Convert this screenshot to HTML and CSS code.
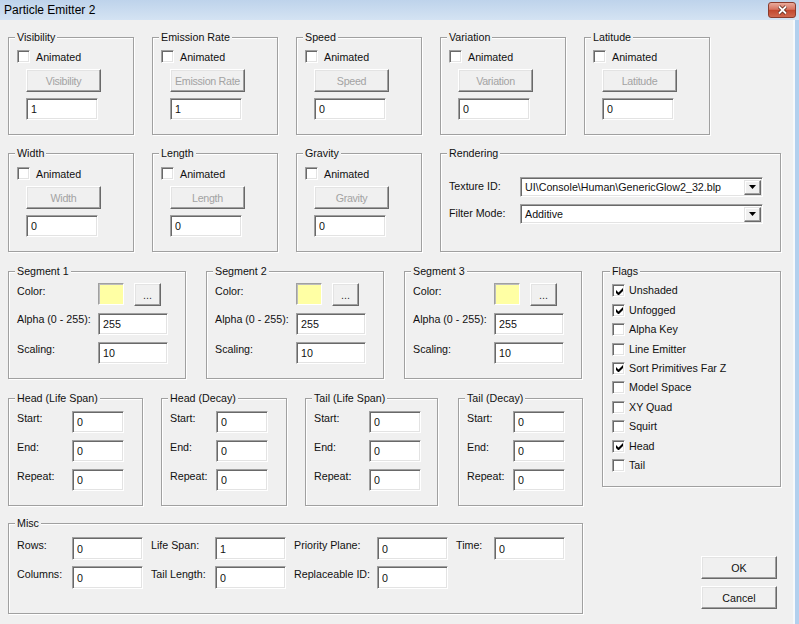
FILE: index.html
```html
<!DOCTYPE html>
<html lang="en">
<head>
    <meta charset="UTF-8">
    <title>Particle Emitter 2</title>
    <link rel="stylesheet" href="styles.css">
</head>
<body>
<div class="window">
    <div class="titlebar">
        <span class="title">Particle Emitter 2</span>
        <span class="close">
            <svg width="13" height="10" viewBox="0 0 13 10">
                <path d="M3 1.5l7 7M10 1.5l-7 7" stroke="#5a2418" stroke-width="3.4"/>
                <path d="M3 1.5l7 7M10 1.5l-7 7" stroke="#fff" stroke-width="1.8"/>
            </svg>
        </span>
    </div>
    <div class="frame-wrap">
        <div class="client">
            <!-- animated tracks -->
            <div class="row row-top">
                <div class="group anim">
                    <div class="legend">Visibility</div>
                    <label class="check-row"><span class="check"></span>Animated</label>
                    <button type="button" class="btn btn-track">Visibility</button>
                    <input class="edit edit-track" type="text" value="1">
                </div>
                <div class="group anim">
                    <div class="legend">Emission Rate</div>
                    <label class="check-row"><span class="check"></span>Animated</label>
                    <button type="button" class="btn btn-track">Emission Rate</button>
                    <input class="edit edit-track" type="text" value="1">
                </div>
                <div class="group anim">
                    <div class="legend">Speed</div>
                    <label class="check-row"><span class="check"></span>Animated</label>
                    <button type="button" class="btn btn-track">Speed</button>
                    <input class="edit edit-track" type="text" value="0">
                </div>
                <div class="group anim">
                    <div class="legend">Variation</div>
                    <label class="check-row"><span class="check"></span>Animated</label>
                    <button type="button" class="btn btn-track">Variation</button>
                    <input class="edit edit-track" type="text" value="0">
                </div>
                <div class="group anim">
                    <div class="legend">Latitude</div>
                    <label class="check-row"><span class="check"></span>Animated</label>
                    <button type="button" class="btn btn-track">Latitude</button>
                    <input class="edit edit-track" type="text" value="0">
                </div>
            </div>

            <div class="row row-mid">
                <div class="group anim">
                    <div class="legend">Width</div>
                    <label class="check-row"><span class="check"></span>Animated</label>
                    <button type="button" class="btn btn-track">Width</button>
                    <input class="edit edit-track" type="text" value="0">
                </div>
                <div class="group anim">
                    <div class="legend">Length</div>
                    <label class="check-row"><span class="check"></span>Animated</label>
                    <button type="button" class="btn btn-track">Length</button>
                    <input class="edit edit-track" type="text" value="0">
                </div>
                <div class="group anim">
                    <div class="legend">Gravity</div>
                    <label class="check-row"><span class="check"></span>Animated</label>
                    <button type="button" class="btn btn-track">Gravity</button>
                    <input class="edit edit-track" type="text" value="0">
                </div>
                <div class="group rendering">
                    <div class="legend">Rendering</div>
                    <div class="render-grid">
                        <span class="lbl">Texture ID:</span>
                        <div class="combo"><span>UI\Console\Human\GenericGlow2_32.blp</span><span class="combo-arrow"><svg width="7" height="4" viewBox="0 0 7 4"><path d="M0 0h7L3.5 4z" fill="#000"/></svg></span></div>
                        <span class="lbl">Filter Mode:</span>
                        <div class="combo"><span>Additive</span><span class="combo-arrow"><svg width="7" height="4" viewBox="0 0 7 4"><path d="M0 0h7L3.5 4z" fill="#000"/></svg></span></div>
                    </div>
                </div>
            </div>

            <div class="lower">
                <div class="lower-main">
                    <!-- segments -->
                    <div class="segments">
                        <div class="group segment">
                            <div class="legend">Segment 1</div>
                            <div class="seg-grid">
                                <span class="lbl lbl-color">Color:</span>
                                <div class="color-pick"><span class="swatch"></span><button type="button" class="btn btn-dots">...</button></div>
                                <span class="lbl">Alpha (0 - 255):</span>
                                <input class="edit edit-seg" type="text" value="255">
                                <span class="lbl lbl-scale">Scaling:</span>
                                <input class="edit edit-seg" type="text" value="10">
                            </div>
                        </div>
                        <div class="group segment">
                            <div class="legend">Segment 2</div>
                            <div class="seg-grid">
                                <span class="lbl lbl-color">Color:</span>
                                <div class="color-pick"><span class="swatch"></span><button type="button" class="btn btn-dots">...</button></div>
                                <span class="lbl">Alpha (0 - 255):</span>
                                <input class="edit edit-seg" type="text" value="255">
                                <span class="lbl lbl-scale">Scaling:</span>
                                <input class="edit edit-seg" type="text" value="10">
                            </div>
                        </div>
                        <div class="group segment">
                            <div class="legend">Segment 3</div>
                            <div class="seg-grid">
                                <span class="lbl lbl-color">Color:</span>
                                <div class="color-pick"><span class="swatch"></span><button type="button" class="btn btn-dots">...</button></div>
                                <span class="lbl">Alpha (0 - 255):</span>
                                <input class="edit edit-seg" type="text" value="255">
                                <span class="lbl lbl-scale">Scaling:</span>
                                <input class="edit edit-seg" type="text" value="10">
                            </div>
                        </div>
                    </div>

                    <!-- head / tail -->
                    <div class="spans">
                        <div class="group span span-hl">
                            <div class="legend">Head (Life Span)</div>
                            <div class="span-grid wide">
                                <span class="lbl">Start:</span><input class="edit" type="text" value="0">
                                <span class="lbl">End:</span><input class="edit" type="text" value="0">
                                <span class="lbl">Repeat:</span><input class="edit" type="text" value="0">
                            </div>
                        </div>
                        <div class="group span span-hd">
                            <div class="legend">Head (Decay)</div>
                            <div class="span-grid narrow">
                                <span class="lbl">Start:</span><input class="edit" type="text" value="0">
                                <span class="lbl">End:</span><input class="edit" type="text" value="0">
                                <span class="lbl">Repeat:</span><input class="edit" type="text" value="0">
                            </div>
                        </div>
                        <div class="group span span-tl">
                            <div class="legend">Tail (Life Span)</div>
                            <div class="span-grid wide">
                                <span class="lbl">Start:</span><input class="edit" type="text" value="0">
                                <span class="lbl">End:</span><input class="edit" type="text" value="0">
                                <span class="lbl">Repeat:</span><input class="edit" type="text" value="0">
                            </div>
                        </div>
                        <div class="group span span-td">
                            <div class="legend">Tail (Decay)</div>
                            <div class="span-grid narrow">
                                <span class="lbl">Start:</span><input class="edit" type="text" value="0">
                                <span class="lbl">End:</span><input class="edit" type="text" value="0">
                                <span class="lbl">Repeat:</span><input class="edit" type="text" value="0">
                            </div>
                        </div>
                    </div>

                    <!-- misc -->
                    <div class="group misc">
                        <div class="legend">Misc</div>
                        <div class="misc-grid">
                            <span class="lbl">Rows:</span><input class="edit" type="text" value="0">
                            <span class="lbl">Life Span:</span><input class="edit" type="text" value="1">
                            <span class="lbl">Priority Plane:</span><input class="edit" type="text" value="0">
                            <span class="lbl">Time:</span><input class="edit" type="text" value="0">
                            <span class="lbl">Columns:</span><input class="edit" type="text" value="0">
                            <span class="lbl">Tail Length:</span><input class="edit" type="text" value="0">
                            <span class="lbl">Replaceable ID:</span><input class="edit" type="text" value="0">
                        </div>
                    </div>
                </div>

                <div class="side">
                    <div class="group flags">
                        <div class="legend">Flags</div>
                        <div class="flag-list">
                            <label class="flag"><span class="check on"><svg width="7" height="7" viewBox="0 0 7 7"><path d="M0 2l2.5 2.5L7 0v3L2.5 7.5 0 5z" fill="#000"/></svg></span>Unshaded</label>
                            <label class="flag"><span class="check on"><svg width="7" height="7" viewBox="0 0 7 7"><path d="M0 2l2.5 2.5L7 0v3L2.5 7.5 0 5z" fill="#000"/></svg></span>Unfogged</label>
                            <label class="flag"><span class="check"></span>Alpha Key</label>
                            <label class="flag"><span class="check"></span>Line Emitter</label>
                            <label class="flag"><span class="check on"><svg width="7" height="7" viewBox="0 0 7 7"><path d="M0 2l2.5 2.5L7 0v3L2.5 7.5 0 5z" fill="#000"/></svg></span>Sort Primitives Far Z</label>
                            <label class="flag"><span class="check"></span>Model Space</label>
                            <label class="flag"><span class="check"></span>XY Quad</label>
                            <label class="flag"><span class="check"></span>Squirt</label>
                            <label class="flag"><span class="check on"><svg width="7" height="7" viewBox="0 0 7 7"><path d="M0 2l2.5 2.5L7 0v3L2.5 7.5 0 5z" fill="#000"/></svg></span>Head</label>
                            <label class="flag"><span class="check"></span>Tail</label>
                        </div>
                    </div>
                    <div class="dialog-buttons">
                        <button type="button" class="btn btn-dialog">OK</button>
                        <button type="button" class="btn btn-dialog">Cancel</button>
                    </div>
                </div>
            </div>
        </div>
        <div class="frame"></div>
    </div>
</div>
</body>
</html>
```

FILE: styles.css
```css
* {
    box-sizing: border-box;
}

body {
    margin: 0;
    background: #f0f0f0;
    font-family: "Liberation Sans", Arial, sans-serif;
    font-size: 10.7px;
    color: #111;
}

.window {
    width: 799px;
    height: 624px;
    overflow: hidden;
}

/* title bar */
.titlebar {
    height: 20px;
    display: flex;
    align-items: center;
    padding: 0 3px 0 4px;
    background: linear-gradient(#bed3eb, #d4e3f3);
}

.title {
    font-size: 12px;
    color: #000;
}

.close {
    margin-left: auto;
    width: 28px;
    height: 16px;
    display: flex;
    align-items: center;
    justify-content: center;
    border: 1px solid #8a3b2c;
    border-radius: 3px;
    background: linear-gradient(#e9ab9c, #d77461 45%, #c2472e 52%, #d0684f);
}

.frame-wrap {
    display: flex;
    height: 604px;
}

.client {
    width: 793px;
    padding: 17px 0 0 8px;
}

.frame {
    width: 6px;
    background: linear-gradient(to right, #f6f9fc 0, #f6f9fc 2px, #b3d0ee 2px);
}

/* group boxes */
.group {
    border: 1px solid #a0a0a0;
    box-shadow: inset 1px 1px 0 #fff, 1px 1px 0 #fff;
    padding: 0 8px;
}

.legend {
    width: fit-content;
    height: 13px;
    line-height: 13px;
    margin: -7px 0 0 -2px;
    padding: 0 2px;
    background: #f0f0f0;
}

.lbl {
    line-height: 13px;
    white-space: nowrap;
}

/* controls */
.check {
    width: 13px;
    height: 13px;
    flex: none;
    display: flex;
    align-items: center;
    justify-content: center;
    background: #fff;
    border: 1px solid;
    border-color: #a0a0a0 #fff #fff #a0a0a0;
    box-shadow: inset 1px 1px 0 #696969, inset -1px -1px 0 #e3e3e3;
}

.check svg {
    margin: 1px 0 0 1px;
}

.btn {
    display: block;
    padding: 0;
    font: inherit;
    color: #111;
    background: #f0f0f0;
    border: 1px solid;
    border-color: #fff #696969 #696969 #fff;
    box-shadow: inset -1px -1px 0 #a0a0a0, inset 1px 1px 0 #e3e3e3;
    text-align: center;
    white-space: nowrap;
}

.edit {
    display: block;
    height: 22px;
    margin: 0;
    padding: 0 4px;
    font: inherit;
    color: #111;
    background: #fff;
    border: 1px solid;
    border-color: #a0a0a0 #fff #fff #a0a0a0;
    box-shadow: inset 1px 1px 0 #696969, inset -1px -1px 0 #e3e3e3;
    outline: none;
}

/* rows */
.row {
    display: flex;
    gap: 18px;
}

.row-top {
    height: 98px;
}

.row-mid {
    height: 99px;
    margin-top: 18px;
}

.anim {
    width: 126px;
}

.check-row {
    display: flex;
    align-items: flex-start;
    gap: 6px;
    height: 13px;
    line-height: 15px;
    margin-top: 6px;
}

.row-mid .check-row {
    margin-top: 7px;
}

.btn-track {
    width: 75px;
    height: 23px;
    margin: 6px 0 0 9px;
    color: #a3a3a3;
    letter-spacing: -0.3px;
}

.edit-track {
    width: 72px;
    margin: 6px 0 0 9px;
}

/* rendering */
.rendering {
    width: 341px;
}

.render-grid {
    display: grid;
    grid-template-columns: 71px 243px;
    grid-template-rows: 20px 20px;
    row-gap: 7px;
    margin-top: 17px;
}

.render-grid .lbl {
    padding-top: 3px;
}

.combo {
    display: flex;
    align-items: center;
    height: 20px;
    padding: 0 1px 0 4px;
    background: #fff;
    border: 1px solid;
    border-color: #a0a0a0 #fff #fff #a0a0a0;
    box-shadow: inset 1px 1px 0 #696969, inset -1px -1px 0 #e3e3e3;
}

.combo-arrow {
    margin-left: auto;
    width: 17px;
    height: 15px;
    display: flex;
    align-items: center;
    justify-content: center;
    background: #f0f0f0;
    border: 1px solid;
    border-color: #e3e3e3 #696969 #696969 #e3e3e3;
    box-shadow: inset -1px -1px 0 #a0a0a0, inset 1px 1px 0 #fff;
}

/* lower part */
.lower {
    display: flex;
    gap: 19px;
    margin-top: 19px;
}

.lower-main {
    width: 575px;
}

.segments {
    display: flex;
    gap: 20px;
    height: 108px;
}

.segment {
    width: 178px;
}

.seg-grid {
    display: grid;
    grid-template-columns: 81px 70px;
    grid-template-rows: 23px 22px 22px;
    row-gap: 7px;
    margin-top: 5px;
}

.lbl-color {
    padding-top: 2px;
}

.lbl-scale {
    padding-top: 1px;
}

.color-pick {
    display: flex;
    gap: 10px;
}

.swatch {
    width: 26px;
    height: 22px;
    flex: none;
    background: #ffffa4;
    border: 1px solid;
    border-color: #a0a0a0 #fff #fff #a0a0a0;
    box-shadow: inset 1px 1px 0 #bdbdbd;
}

.btn-dots {
    width: 27px;
    height: 23px;
    flex: none;
    color: #333;
}

.edit-seg {
    width: 70px;
}

.spans {
    display: flex;
    gap: 18px;
    height: 108px;
    margin-top: 19px;
}

.span-hl {
    width: 135px;
}

.span-hd {
    width: 126px;
}

.span-tl {
    width: 133px;
}

.span-td {
    width: 125px;
    margin-left: 2px;
}

.span-grid {
    display: grid;
    grid-template-rows: 22px 22px 22px;
    row-gap: 7px;
    margin-top: 6px;
}

.span-grid.wide {
    grid-template-columns: 55px 52px;
}

.span-grid.narrow {
    grid-template-columns: 46px 52px;
}

.span-grid .lbl {
    padding-top: 1px;
}

.misc {
    height: 91px;
    margin-top: 17px;
}

.misc-grid {
    display: grid;
    grid-template-columns: 55px 71px 72px 71px 91px 71px 46px 71px;
    grid-template-rows: 23px 23px;
    row-gap: 6px;
    margin-top: 7px;
}

.misc-grid .edit {
    height: 23px;
}

.misc-grid .lbl {
    padding: 2px 0 0 8px;
}

.misc-grid > :nth-child(8n+1) {
    padding-left: 0;
}

/* right column */
.side {
    width: 179px;
}

.flags {
    height: 216px;
    padding-left: 9px;
}

.flag-list {
    margin-top: 3px;
}

.flag {
    display: flex;
    align-items: center;
    gap: 4px;
    height: 19.45px;
    line-height: 13px;
}

.dialog-buttons {
    display: flex;
    flex-direction: column;
    gap: 7px;
    margin: 69px 0 0 99px;
}

.btn-dialog {
    width: 76px;
    height: 23px;
}
```
